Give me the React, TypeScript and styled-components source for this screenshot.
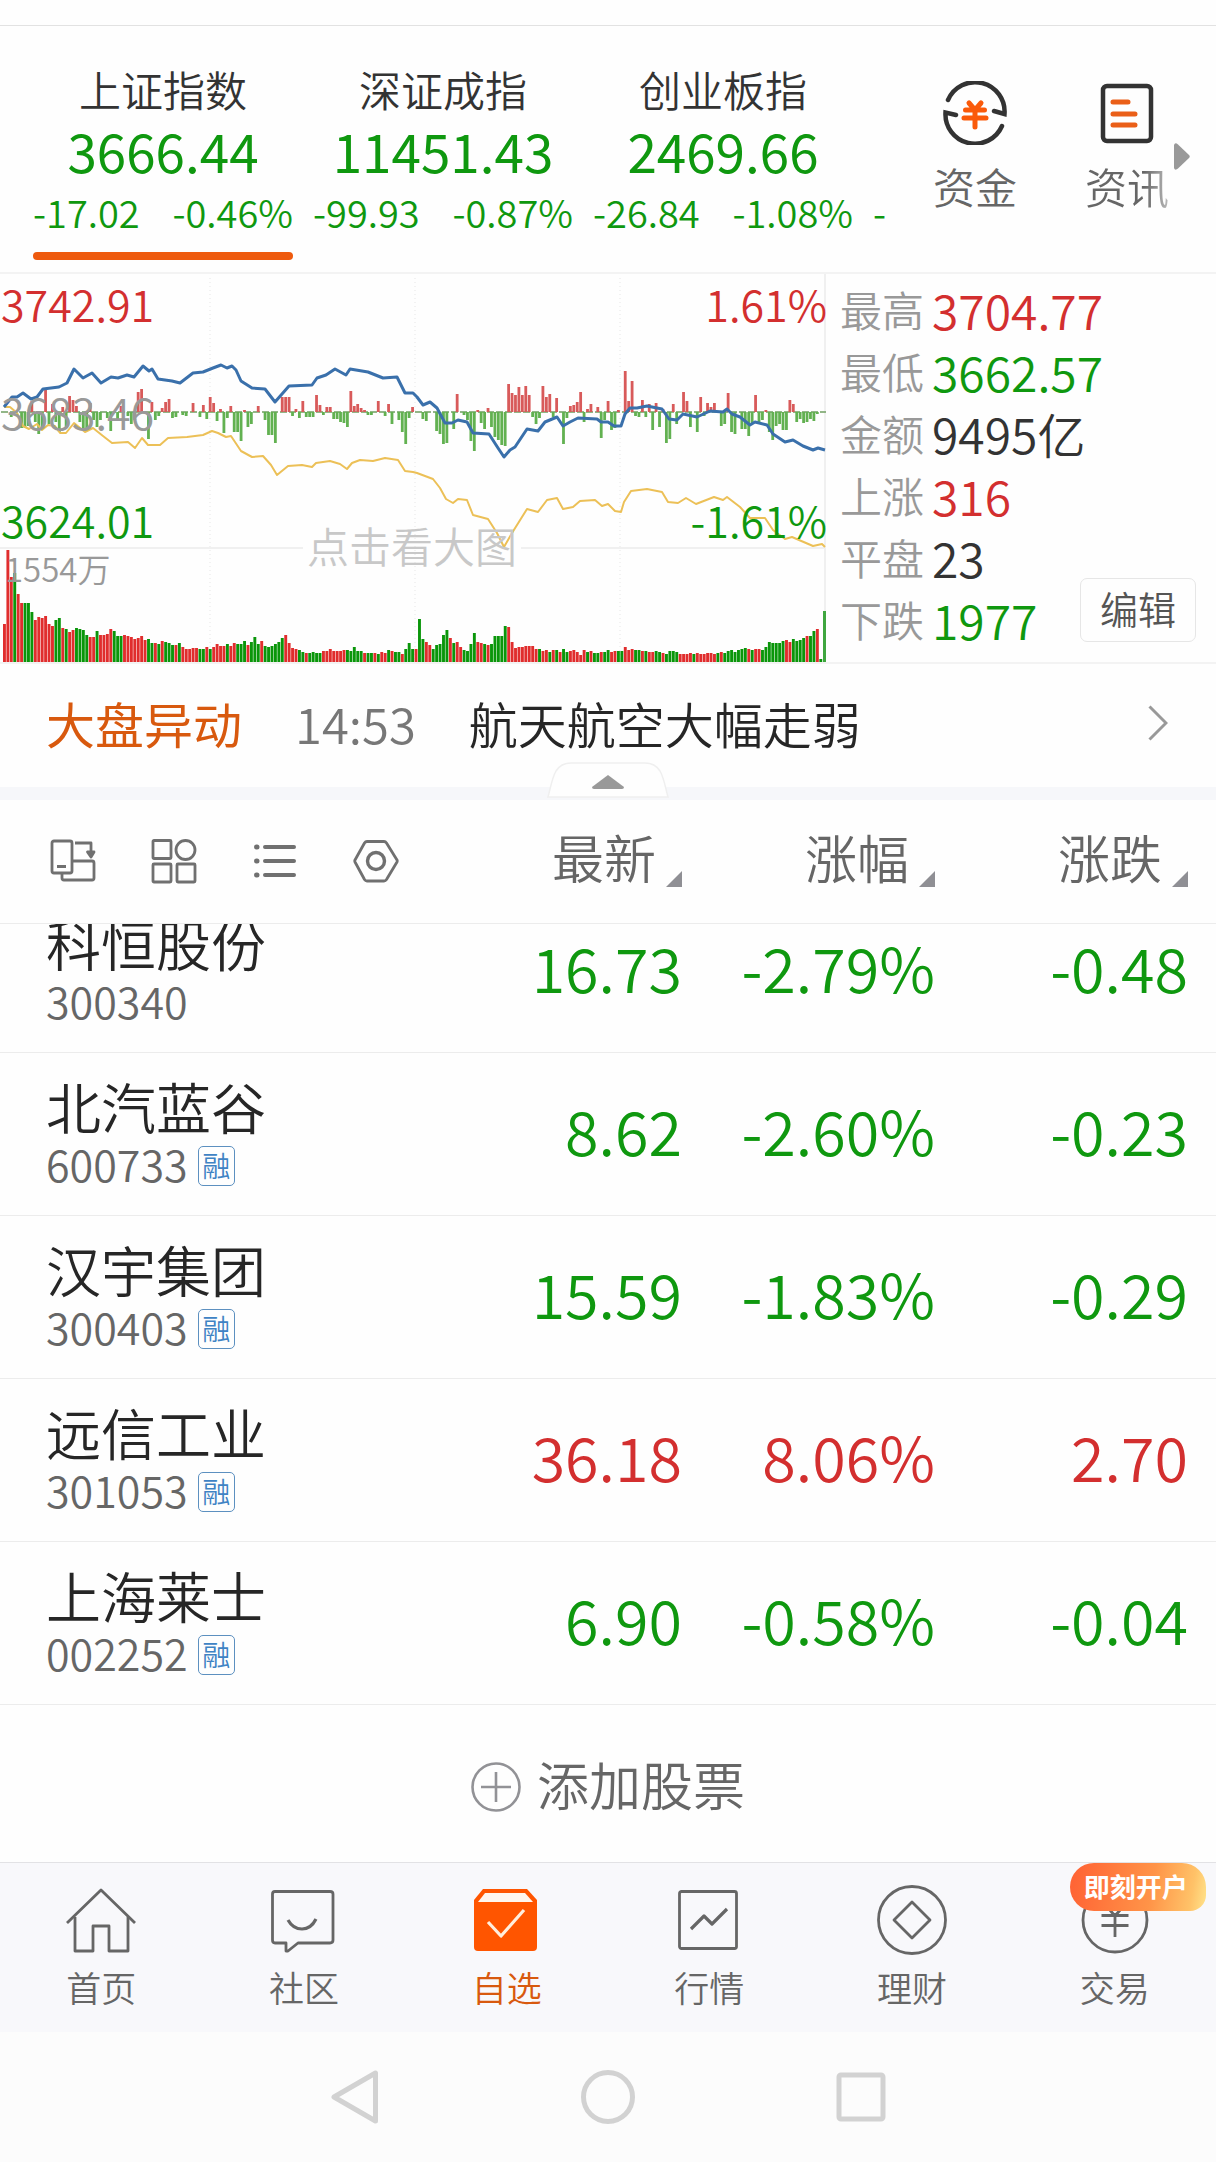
import React from "react";
import styled, { createGlobalStyle } from "styled-components";

const color = {
  up: "#d32f2f",
  down: "#0f980f",
  ink: "#262626",
  heading: "#333333",
  muted: "#666666",
  faint: "#999999",
  line: "#ececec",
  accent: "#ee5a0e",
  brand: "#ff5500",
};

const GlobalStyle = createGlobalStyle`
  * { box-sizing: border-box; }
  body {
    margin: 0;
    background: #fefefe;
    color: ${color.ink};
    font-family: "Noto Sans CJK SC", "Noto Sans", sans-serif;
    font-weight: 350;
  }
  button {
    margin: 0;
    padding: 0;
    border: 0;
    background: none;
    color: inherit;
    font: inherit;
    cursor: pointer;
  }
  a { color: inherit; text-decoration: none; }
  svg { display: block; flex: none; }
`;

type Trend = "up" | "down" | "flat";
const trendColor = (t: Trend) =>
  t === "up" ? color.up : t === "down" ? color.down : color.heading;

/* ---------- index strip ---------- */

const Header = styled.header`
  margin-top: 25px;
  border-top: 1px solid #e2e2e2;
  display: grid;
  grid-template-columns: minmax(0, 887fr) minmax(0, 329fr);
`;

const IndexStrip = styled.div`
  display: flex;
  gap: 20px;
  padding: 38px 0 12px 33px;
  overflow: hidden;
`;

const IndexCard = styled.button`
  flex: none;
  width: 260px;
  display: flex;
  flex-direction: column;
  align-items: center;
  justify-content: flex-start;
`;

const IndexName = styled.span`
  font-size: 42px;
  line-height: 50px;
  color: ${color.heading};
`;

const IndexValue = styled.span`
  font-size: 53px;
  line-height: 72px;
  font-weight: 400;
  color: ${color.down};
`;

const IndexChange = styled.span`
  width: 100%;
  display: flex;
  justify-content: space-between;
  font-size: 38px;
  line-height: 52px;
  color: ${color.down};
`;

const ActiveMark = styled.span<{ $on: boolean }>`
  width: 100%;
  height: 8px;
  margin-top: 14px;
  border-radius: 4px;
  background: ${(p) => (p.$on ? color.accent : "transparent")};
`;

const PartialCard = styled(IndexCard)`
  justify-content: flex-end;
  padding-bottom: 22px;
`;

const Shortcuts = styled.nav`
  display: flex;
  align-items: flex-start;
  padding: 55px 0 0 46px;
`;

const Shortcut = styled.a<{ $fade?: boolean }>`
  display: flex;
  flex-direction: column;
  align-items: center;
  gap: 16px;
  width: 84px;
  margin-right: ${(p) => (p.$fade ? 5 : 68)}px;
  font-size: 42px;
  line-height: 50px;
  white-space: nowrap;
  color: ${color.muted};
  span {
    ${(p) =>
      p.$fade
        ? `color: transparent; background: linear-gradient(90deg, ${color.muted} 70%, #bbbbbb); background-clip: text; -webkit-background-clip: text;`
        : ""}
  }
`;

const MoreArrow = styled.button`
  margin-top: 62px;
`;

/* ---------- market panel ---------- */

const Market = styled.section`
  display: grid;
  grid-template-columns: minmax(0, 826fr) minmax(0, 390fr);
  border-top: 2px solid #f3f3f3;
  border-bottom: 2px solid #f3f3f3;
`;

const ChartBox = styled.div`
  position: relative;
  svg { width: 100%; height: auto; }
`;

const ChartLabel = styled.span<{ $top: number; $right?: boolean; $color: string }>`
  position: absolute;
  top: ${(p) => p.$top}px;
  ${(p) => (p.$right ? "right: -1px;" : "left: 1px;")}
  font-size: 43px;
  line-height: 50px;
  color: ${(p) => p.$color};
`;

const VolumeLabel = styled(ChartLabel)`
  left: 5px;
  font-size: 33px;
`;

const ChartHint = styled.a`
  position: absolute;
  top: 246px;
  left: 303px;
  padding: 0 4px;
  font-size: 42px;
  line-height: 50px;
  color: #c8c8c8;
`;

const StatsPanel = styled.div`
  display: flex;
  align-items: flex-end;
  justify-content: space-between;
  padding: 4px 20px 12px 14px;
`;

const Stats = styled.dl`
  margin: 0;
  display: grid;
  grid-template-columns: auto auto;
  grid-auto-rows: 62px;
  column-gap: 8px;
  line-height: 62px;
  white-space: nowrap;
`;

const StatName = styled.dt`
  font-size: 42px;
  color: ${color.faint};
`;

const StatValue = styled.dd<{ $trend: Trend }>`
  margin: 0;
  font-size: 48px;
  color: ${(p) => trendColor(p.$trend)};
`;

const EditButton = styled.button`
  flex: none;
  width: 116px;
  height: 64px;
  margin-left: -80px;
  margin-bottom: 8px;
  border: 1px solid #e6e6e6;
  border-radius: 7px;
  font-size: 38px;
  line-height: 56px;
  padding-bottom: 4px;
  color: #555555;
`;

/* ---------- news line ---------- */

const News = styled.a`
  display: flex;
  align-items: center;
  gap: 53px;
  height: 123px;
  padding: 0 48px 6px 46px;
  font-size: 49px;
  line-height: 60px;
  white-space: nowrap;
  svg { margin-left: auto; }
`;

const NewsTag = styled.strong`
  font-weight: 400;
  color: #d8590e;
`;

const NewsTime = styled.time`
  color: #777777;
`;

const Divider = styled.div`
  position: relative;
  height: 13px;
  background: #f6f7fa;
`;

const FoldHandle = styled.button`
  position: absolute;
  left: 50%;
  top: -25px;
  transform: translateX(-50%);
`;

/* ---------- watch list ---------- */

const Toolbar = styled.div`
  display: flex;
  align-items: flex-start;
  height: 124px;
  padding: 27px 28px 0 50px;
  border-bottom: 1px solid ${color.line};
`;

const ToolIcons = styled.div`
  flex: 1;
  display: flex;
  gap: 55px;
  height: 68px;
  align-items: center;
`;

const SortButton = styled.button`
  width: 253px;
  display: flex;
  align-items: flex-end;
  justify-content: flex-end;
  gap: 10px;
  font-size: 52px;
  line-height: 60px;
  color: ${color.muted};
`;

const ListClip = styled.div`
  overflow: hidden;
`;

const StockTable = styled.table`
  width: 100%;
  margin-top: -34px;
  border-collapse: separate;
  border-spacing: 0;
  table-layout: fixed;
`;

const StockRow = styled.tr`
  height: 163px;
  > * { border-bottom: 1px solid ${color.line}; }
`;

const StockCell = styled.th`
  padding: 0 0 12px 46px;
  text-align: left;
  font-weight: inherit;
`;

const StockName = styled.div`
  font-size: 55px;
  line-height: 70px;
`;

const StockCode = styled.div`
  display: flex;
  align-items: center;
  gap: 10px;
  font-size: 43px;
  line-height: 46px;
  color: ${color.muted};
`;

const MarginTag = styled.span`
  width: 37px;
  height: 40px;
  margin-top: 6px;
  border: 1px solid #5c90c0;
  border-radius: 5px;
  font-size: 28px;
  line-height: 36px;
  text-align: center;
  color: #3f83c4;
`;

const NumberCell = styled.td<{ $trend: Trend; $last?: boolean }>`
  width: ${(p) => (p.$last ? 281 : 253)}px;
  padding: 0 ${(p) => (p.$last ? 28 : 0)}px 8px 0;
  text-align: right;
  font-size: 61px;
  line-height: 72px;
  color: ${(p) => trendColor(p.$trend)};
`;

const AddStock = styled.button`
  width: 100%;
  height: 157px;
  display: flex;
  align-items: center;
  justify-content: center;
  gap: 16px;
  font-size: 52px;
  line-height: 60px;
  color: ${color.muted};
  svg { margin-top: 6px; }
`;

/* ---------- bottom bars ---------- */

const TabBar = styled.nav`
  display: grid;
  grid-template-columns: repeat(6, minmax(0, 1fr));
  border-top: 1px solid #e2e2e5;
  background: #f8f8fb;
`;

const Tab = styled.a<{ $active?: boolean }>`
  position: relative;
  display: flex;
  flex-direction: column;
  align-items: center;
  gap: 10px;
  padding: 22px 0 23px;
  font-size: 35px;
  line-height: 44px;
  color: ${(p) => (p.$active ? "#d8590e" : color.muted)};
`;

const Promo = styled.span`
  position: absolute;
  top: 0;
  left: 50%;
  width: 136px;
  height: 48px;
  margin-left: -45px;
  padding-right: 4px;
  border-radius: 24px 24px 16px 24px;
  background: linear-gradient(100deg, #ff6535 5%, #ff9448 60%, #ffc268 88%, #ffe48c);
  font-size: 26px;
  line-height: 46px;
  font-weight: 700;
  text-align: center;
  color: #ffffff;
`;

const SystemBar = styled.div`
  display: flex;
  justify-content: center;
  gap: 199px;
  padding: 38px 0;
  background: #fcfcfc;
`;

/* ---------- chart data ---------- */

// One entry per minute: bar height, then R (rising) or G (falling).
const VOLUME =
  "38R 112R 85R 89G 68R 59R 59G 59G 50G 42R 45R 44R 46R 38R 36R 42G 44G 34R 33G 30R 32R 34G 33G 32G 27G 25R 25R 31G 27R 27R 28R 33R 31G 26G 26G 27R 26R 25R 23R 24R 26R 22R 23G 19G 19R 18G 21R 20G 19G 17G 17R 19G 15R 13R 13R 14R 14R 13G 13G 15R 13G 15R 18R 16R 16R 18G 16R 19R 18G 18G 21G 17R 20G 25G 18G 21R 16G 15G 16G 18G 20G 24G " +
  "27R 19R 14R 13R 12G 10G 9R 9G 10G 9G 9G 11R 11R 13R 11R 11R 11R 12R 12G 11G 15G 11G 11G 9R 9G 9G 9R 8G 10R 9R 12G 11R 10G 10G 8R 13G 19G 13G 13R 43G 23G 20R 17R 13G 17G 18G 27G 32G 24R 19G 20R 15R 12G 11G 18G 29G 20R 19R 18G 17R 18G 26G 26G 26G " +
  "36G 35R 20R 14R 15R 15R 16R 16R 16R 13R 13G 11R 12R 10G 12R 12G 10R 13G 10G 11R 12R 10R 7R 12R 10G 11R 9G 9G 10R 10G 12G 10R 11R 11G 11G 15R 12R 13R 12G 12G 11R 11G 10R 10R 11G 10G 9R 8G 11G 11G 10G 8R 8R 8R 9R 8G 9R 8R 8R 9R 9R 8R 9G 10R 9G 11G 12G 10G 12G 13G 14G 13R 12G 13R 13R 12G 15G " +
  "20G 19G 19G 19G 21G 22R 20R 23G 21G 22G 24G 26R 26G 31G 33R 3G";

// Minute index and signed strength against the previous close.
const MOMENTUM: Array<[number, number]> = [
  [8, 11], [12, 24], [14, 8], [17, 5], [19, 16], [20, 12], [21, 6], [25, 9], [34, 6], [39, 20], [40, 23], [43, 10], [46, 4], [47, 10], [48, 13],
  [55, 9], [58, 7], [60, 15], [61, 9], [63, 3], [66, 6], [70, 2], [74, 6], [81, 15], [82, 15], [83, 15], [85, 3], [87, 11],
  [91, 17], [92, 7], [94, 5], [95, 5], [101, 21], [102, 6], [103, 8], [104, 4], [105, 2], [109, 11], [112, 8], [119, 5], [132, 18],
  [138, 2], [141, 4], [147, 28], [148, 19], [149, 17], [150, 25], [151, 17], [152, 26], [153, 17], [157, 26], [158, 15],
  [159, 18], [161, 14], [165, 6], [166, 7], [167, 10], [168, 20], [170, 3], [171, 8], [173, 5], [176, 11], [179, 2], [181, 41],
  [182, 11], [183, 31], [186, 12], [188, 8], [190, 9], [192, 3], [195, 8], [198, 20], [199, 11], [203, 15], [205, 9], [206, 5],
  [207, 9], [211, 19], [219, 17], [222, 2], [229, 12], [230, 8],
  [2, -5], [5, -16], [6, -16], [7, -14], [9, -10], [10, -22], [11, -16], [13, -12], [15, -10], [16, -20], [18, -16], [22, -10],
  [23, -18], [24, -19], [26, -8], [27, -15], [28, -8], [30, -6], [31, -19], [33, -8], [36, -4], [37, -12],
  [38, -8], [42, -27], [44, -8], [45, -4], [49, -6], [50, -5], [52, -3], [53, -4], [57, -5], [59, -7], [62, -9], [64, -21],
  [65, -6], [67, -20], [68, -20], [69, -29], [71, -15], [72, -12], [76, -8], [77, -23], [78, -23], [79, -31], [84, -4],
  [86, -6], [88, -5], [89, -5], [90, -5], [93, -3], [96, -7], [97, -7], [98, -10], [99, -11], [100, -15], [106, -3],
  [107, -3], [111, -4], [113, -12], [115, -8], [116, -20], [117, -32], [118, -6], [122, -7], [123, -9], [126, -19], [127, -22], [128, -32], [129, -31],
  [131, -17], [134, -3], [135, -8], [136, -29], [137, -39], [139, -11], [140, -17], [142, -15], [143, -25], [144, -28], [145, -33], [146, -34],
  [154, -5], [155, -12], [156, -6], [160, -5], [163, -32], [164, -6], [169, -10], [174, -26], [175, -8], [177, -18], [178, -16],
  [184, -4], [185, -5], [187, -5], [189, -18], [191, -15], [193, -31], [194, -27], [196, -12], [200, -15], [202, -20], [204, -4], [209, -14],
  [210, -12], [212, -20], [213, -22], [215, -17], [216, -17], [217, -24], [218, -12], [220, -10], [221, -8], [223, -20], [224, -28], [225, -14],
  [226, -12], [227, -18], [228, -18], [231, -10], [232, -7], [233, -11], [234, -10], [235, -7], [236, -9], [237, -2],
];

const PRICE_LINE =
  "4,133 12,123 17,123 23,119 31,125 37,123 43,115 59,113 67,109 74,95 83,104 92,99 101,109 111,103 118,104 127,101 134,103 143,92 149,97 152,95 158,105 172,107 180,109 193,99 203,98 213,94 221,91 227,94 232,92 236,96 241,107 252,114 265,115 275,128 289,112 312,111 317,104 326,101 335,95 346,101 350,95 368,98 383,104 397,103 405,119 413,119 417,123 423,131 430,128 437,134 445,149 452,149 458,146 467,148 473,159 489,160 498,174 504,183 510,176 515,173 527,155 538,157 545,148 557,143 563,152 570,148 578,144 597,145 601,148 608,148 614,152 621,152 625,140 630,134 637,134 647,132 662,135 669,145 677,146 683,140 697,143 710,137 723,138 727,135 732,140 740,143 750,151 755,148 767,151 773,160 785,168 793,166 803,172 813,176 818,174 825,176";

const AVERAGE_LINE =
  "4,133 10,133 17,139 23,152 29,155 37,150 42,156 48,151 55,152 60,159 66,159 74,149 85,158 93,154 103,162 112,169 128,168 135,174 142,164 148,171 160,171 168,164 187,163 203,161 212,157 218,159 226,163 231,162 241,177 252,183 263,182 271,191 277,201 288,192 302,191 312,193 316,189 330,187 340,190 347,195 352,189 360,186 373,187 385,184 398,186 405,197 413,198 417,199 433,205 440,214 446,225 453,229 458,225 467,226 473,241 488,245 497,259 504,273 512,259 527,235 538,238 547,226 557,224 563,235 573,233 580,227 595,226 602,232 608,230 615,237 621,238 624,228 631,217 647,215 662,218 668,228 678,229 686,224 696,230 714,223 723,226 727,223 740,233 750,244 765,244 773,256 785,265 792,263 813,272 822,270 825,273";

const minuteX = (i: number) => 3 + i * 3.43;

function IntradayChart() {
  return (
    <svg viewBox="0 0 826 388" role="img" aria-label="上证指数分时图">
      <g stroke="#e6e6e6" strokeDasharray="1 3">
        <line x1="210" y1="4" x2="210" y2="388" />
        <line x1="415" y1="4" x2="415" y2="388" />
        <line x1="620" y1="4" x2="620" y2="388" />
      </g>
      <path d="M0 274H303M521 274H826M825 0V388" stroke="#f0f0f0" strokeWidth="2" fill="none" />
      <line x1="1" y1="138" x2="826" y2="138" stroke="#6f9f60" strokeWidth="1.4" strokeDasharray="7 2" />
      {MOMENTUM.map(([i, v]) => (
        <rect
          key={i}
          x={minuteX(i)}
          y={v > 0 ? 138 - v : 138}
          width="2.8"
          height={Math.abs(v)}
          fill={v > 0 ? "#d85a5a" : "#62b151"}
        />
      ))}
      {VOLUME.split(" ").map((bar, i) => {
        const h = parseInt(bar, 10);
        return (
          <rect
            key={i}
            x={minuteX(i)}
            y={388 - h}
            width="2.9"
            height={h}
            fill={bar.endsWith("R") ? "#e02d2d" : "#0a960a"}
          />
        );
      })}
      <rect x="823" y="337" width="3" height="51" fill="#3fa63f" />
      <polyline points={AVERAGE_LINE} fill="none" stroke="#ecc057" strokeWidth="2" strokeLinejoin="round" />
      <polyline points={PRICE_LINE} fill="none" stroke="#3a70ab" strokeWidth="3" strokeLinejoin="round" />
    </svg>
  );
}

/* ---------- icons ---------- */

const FundsIcon = () => (
  <svg width="64" height="64" viewBox="0 0 64 64" fill="none">
    <g stroke="#333" strokeWidth="4.5" strokeLinecap="round">
      <path d="M5 19A29.500 29.500 0 0 1 61.500 33L51 30" />
      <path d="M59 45A29.500 29.500 0 0 1 2.500 31.500L13 34" />
    </g>
    <g stroke="#fa5a0a" strokeWidth="5" strokeLinecap="round">
      <path d="M26 22L32 29L38 22M32 29V46M22.500 29H41.500M21 37H43" />
    </g>
  </svg>
);

const InfoIcon = () => (
  <svg width="64" height="64" viewBox="0 0 64 64" fill="none">
    <rect x="8" y="5" width="48" height="55" rx="4" stroke="#333" strokeWidth="4.5" />
    <path d="M18 21H33M18 33H40M18 44H40" stroke="#ea5f18" strokeWidth="5" strokeLinecap="round" />
  </svg>
);

const iconProps = {
  width: 46,
  height: 46,
  viewBox: "0 0 46 46",
  fill: "none",
  stroke: "#707070",
  strokeWidth: 2.8,
  strokeLinejoin: "round" as const,
};

const RotateIcon = () => (
  <svg {...iconProps}>
    <rect x="2" y="3" width="20" height="32" rx="2" />
    <path d="M12 35V40Q12 42 14 42H42Q44 42 44 40V25Q44 23 42 23H22M7 28.500H16M25 5H41V15" />
    <path d="M37.500 14H44L41 19Z" fill="#707070" />
  </svg>
);

const GridIcon = () => (
  <svg {...iconProps}>
    <rect x="2" y="2.500" width="18" height="18" rx="1" />
    <circle cx="34.500" cy="12" r="9.500" />
    <rect x="2" y="26" width="18" height="18" rx="1" />
    <rect x="26" y="26" width="18" height="18" rx="1" />
  </svg>
);

const ListIcon = () => (
  <svg {...iconProps} strokeWidth={4} strokeLinecap="round">
    <path d="M13 9H42M13 23H42M13 37H42" />
    <path d="M4.500 9H5M4.500 23H5M4.500 37H5" strokeWidth={5} />
  </svg>
);

const HexIcon = () => (
  <svg {...iconProps}>
    <path d="M14 3.500H31Q32.500 3.500 33.500 5L44 22Q44.500 23 44 24L33.500 41.500Q32.500 43 31 43H14Q12.500 43 11.500 41.500L2 24Q1.500 23 2 22L11.500 5Q12.500 3.500 14 3.500Z" />
    <circle cx="23" cy="23" r="8.500" strokeWidth={3.4} />
  </svg>
);

const Corner = () => (
  <svg width="16" height="16" viewBox="0 0 16 16">
    <path d="M16 0V16H0Z" fill="#8f8f94" />
  </svg>
);

const tabIcon = {
  width: 70,
  height: 70,
  viewBox: "0 0 70 70",
  fill: "none",
  stroke: "#666666",
  strokeWidth: 2.8,
  strokeLinejoin: "round" as const,
};

const HomeIcon = () => (
  <svg {...tabIcon}>
    <path d="M1 38L35 5L69 38" />
    <path d="M9 32V66H27V41H43V66H62V32" />
  </svg>
);

const ChatIcon = () => (
  <svg {...tabIcon}>
    <path d="M6 6.500H61Q64 6.500 64 9V55Q64 58 61 58H29L19 66H17V58H6Q3.500 58 3.500 55V9Q3.500 6.500 6 6.500Z" />
    <path d="M19 35Q24 44 33 44Q42 44 47 34" strokeWidth={3.2} />
  </svg>
);

const PickIcon = () => (
  <svg {...tabIcon} stroke="none">
    <path d="M11 4H55L65 15V62Q65 66 61 66H6Q2 66 2 62V15Z" fill={color.brand} />
    <path d="M13 8H53L61 17H6Z" fill="#fff6ee" />
    <path d="M16 37L29 51L52 25" stroke="#ffeedd" strokeWidth="3.200" />
  </svg>
);

const TrendIcon = () => (
  <svg {...tabIcon}>
    <rect x="5.500" y="6.500" width="57" height="57" rx="2" />
    <path d="M17 44L30 31L38 39L53 24" strokeWidth={3.2} />
  </svg>
);

const WealthIcon = () => (
  <svg {...tabIcon}>
    <circle cx="35" cy="35" r="33.500" />
    <path d="M35 17L53 35L35 53L17 35Z" />
  </svg>
);

const TradeIcon = () => (
  <svg {...tabIcon}>
    <circle cx="35" cy="35" r="32" />
    <path d="M24 18L35 31L46 18M35 28V52M21.500 30.500H48.500M21.500 40.500H48.500" />
  </svg>
);

/* ---------- page data ---------- */

const indices = [
  { name: "上证指数", value: "3666.44", diff: "-17.02", pct: "-0.46%" },
  { name: "深证成指", value: "11451.43", diff: "-99.93", pct: "-0.87%" },
  { name: "创业板指", value: "2469.66", diff: "-26.84", pct: "-1.08%" },
];

const stats: Array<[string, string, Trend]> = [
  ["最高", "3704.77", "up"],
  ["最低", "3662.57", "down"],
  ["金额", "9495亿", "flat"],
  ["上涨", "316", "up"],
  ["平盘", "23", "flat"],
  ["下跌", "1977", "down"],
];

const stocks: Array<{ name: string; code: string; margin: boolean; nums: string[]; trend: Trend }> = [
  { name: "科恒股份", code: "300340", margin: false, nums: ["16.73", "-2.79%", "-0.48"], trend: "down" },
  { name: "北汽蓝谷", code: "600733", margin: true, nums: ["8.62", "-2.60%", "-0.23"], trend: "down" },
  { name: "汉宇集团", code: "300403", margin: true, nums: ["15.59", "-1.83%", "-0.29"], trend: "down" },
  { name: "远信工业", code: "301053", margin: true, nums: ["36.18", "8.06%", "2.70"], trend: "up" },
  { name: "上海莱士", code: "002252", margin: true, nums: ["6.90", "-0.58%", "-0.04"], trend: "down" },
];

const tabs = [
  { label: "首页", Icon: HomeIcon },
  { label: "社区", Icon: ChatIcon },
  { label: "自选", Icon: PickIcon, active: true },
  { label: "行情", Icon: TrendIcon },
  { label: "理财", Icon: WealthIcon },
  { label: "交易", Icon: TradeIcon, promo: "即刻开户" },
];

export default function App() {
  return (
    <>
      <GlobalStyle />
      <Header>
        <IndexStrip>
          {indices.map((it, i) => (
            <IndexCard key={it.name}>
              <IndexName>{it.name}</IndexName>
              <IndexValue>{it.value}</IndexValue>
              <IndexChange>
                <span>{it.diff}</span>
                <span>{it.pct}</span>
              </IndexChange>
              <ActiveMark $on={i === 0} />
            </IndexCard>
          ))}
          <PartialCard>
            <IndexChange>-</IndexChange>
          </PartialCard>
        </IndexStrip>
        <Shortcuts>
          <Shortcut href="#funds">
            <FundsIcon />
            <span>资金</span>
          </Shortcut>
          <Shortcut href="#info" $fade>
            <InfoIcon />
            <span>资讯</span>
          </Shortcut>
          <MoreArrow aria-label="更多">
            <svg width="16" height="27" viewBox="0 0 16 27">
              <path d="M0 2Q1 -1 4 1.500L15 12Q16.500 13.500 15 15L4 25.500Q1 28 0 25Z" fill="#999" />
            </svg>
          </MoreArrow>
        </Shortcuts>
      </Header>

      <Market>
        <ChartBox>
          <ChartHint href="#chart">点击看大图</ChartHint>
          <IntradayChart />
          <ChartLabel $top={4} $color={color.up}>3742.91</ChartLabel>
          <ChartLabel $top={112} $color={color.faint}>3683.46</ChartLabel>
          <ChartLabel $top={220} $color={color.down}>3624.01</ChartLabel>
          <ChartLabel $top={4} $right $color={color.up}>1.61%</ChartLabel>
          <ChartLabel $top={220} $right $color={color.down}>-1.61%</ChartLabel>
          <VolumeLabel $top={269} $color={color.faint}>1554万</VolumeLabel>
        </ChartBox>
        <StatsPanel>
          <Stats>
            {stats.map(([name, value, trend]) => (
              <React.Fragment key={name}>
                <StatName>{name}</StatName>
                <StatValue $trend={trend}>{value}</StatValue>
              </React.Fragment>
            ))}
          </Stats>
          <EditButton>编辑</EditButton>
        </StatsPanel>
      </Market>

      <News href="#news">
        <NewsTag>大盘异动</NewsTag>
        <NewsTime>14:53</NewsTime>
        <span>航天航空大幅走弱</span>
        <svg width="20" height="36" viewBox="0 0 20 36" fill="none">
          <path d="M1.500 1.500L18 18L1.500 34.500" stroke="#999" strokeWidth="3" />
        </svg>
      </News>

      <Divider>
        <FoldHandle aria-label="收起">
          <svg width="122" height="36" viewBox="0 0 122 36">
            <path
              d="M1 35C4 24 5 16 9 9Q14 1 24 1H98Q108 1 113 9C117 16 118 24 121 35Z"
              fill="#fefefe"
              stroke="#efefef"
              strokeWidth="1.500"
            />
            <path d="M61 13L77 25Q77 27 75 27H47Q45 27 45 25Z" fill="#999" />
          </svg>
        </FoldHandle>
      </Divider>

      <Toolbar>
        <ToolIcons>
          <button aria-label="横屏"><RotateIcon /></button>
          <button aria-label="宫格"><GridIcon /></button>
          <button aria-label="列表"><ListIcon /></button>
          <button aria-label="设置"><HexIcon /></button>
        </ToolIcons>
        {["最新", "涨幅", "涨跌"].map((t) => (
          <SortButton key={t}>
            {t}
            <Corner />
          </SortButton>
        ))}
      </Toolbar>

      <ListClip>
        <StockTable aria-label="自选股">
          <tbody>
            {stocks.map((s) => (
              <StockRow key={s.code}>
                <StockCell scope="row">
                  <StockName>{s.name}</StockName>
                  <StockCode>
                    {s.code}
                    {s.margin && <MarginTag>融</MarginTag>}
                  </StockCode>
                </StockCell>
                {s.nums.map((n, i) => (
                  <NumberCell key={i} $trend={s.trend} $last={i === 2}>
                    {n}
                  </NumberCell>
                ))}
              </StockRow>
            ))}
          </tbody>
        </StockTable>
      </ListClip>

      <AddStock>
        <svg width="50" height="50" viewBox="0 0 50 50" fill="none" stroke="#929296" strokeWidth="2.600">
          <circle cx="25" cy="25" r="23.500" />
          <path d="M25 10V40M10 25H40" />
        </svg>
        添加股票
      </AddStock>

      <TabBar>
        {tabs.map(({ label, Icon, active, promo }) => (
          <Tab key={label} href={"#" + label} $active={active}>
            <Icon />
            {label}
            {promo && <Promo>{promo}</Promo>}
          </Tab>
        ))}
      </TabBar>

      <SystemBar>
        <button aria-label="返回">
          <svg width="54" height="54" viewBox="0 0 54 54" fill="none" stroke="#d2d2d2" strokeWidth="5" strokeLinejoin="round">
            <path d="M47.500 3V51L6 27Z" />
          </svg>
        </button>
        <button aria-label="主页">
          <svg width="54" height="54" viewBox="0 0 54 54" fill="none" stroke="#d2d2d2" strokeWidth="5">
            <circle cx="27" cy="27" r="24.500" />
          </svg>
        </button>
        <button aria-label="最近">
          <svg width="54" height="54" viewBox="0 0 54 54" fill="none" stroke="#d2d2d2" strokeWidth="5">
            <rect x="5" y="5" width="44" height="44" rx="2" />
          </svg>
        </button>
      </SystemBar>
    </>
  );
}
